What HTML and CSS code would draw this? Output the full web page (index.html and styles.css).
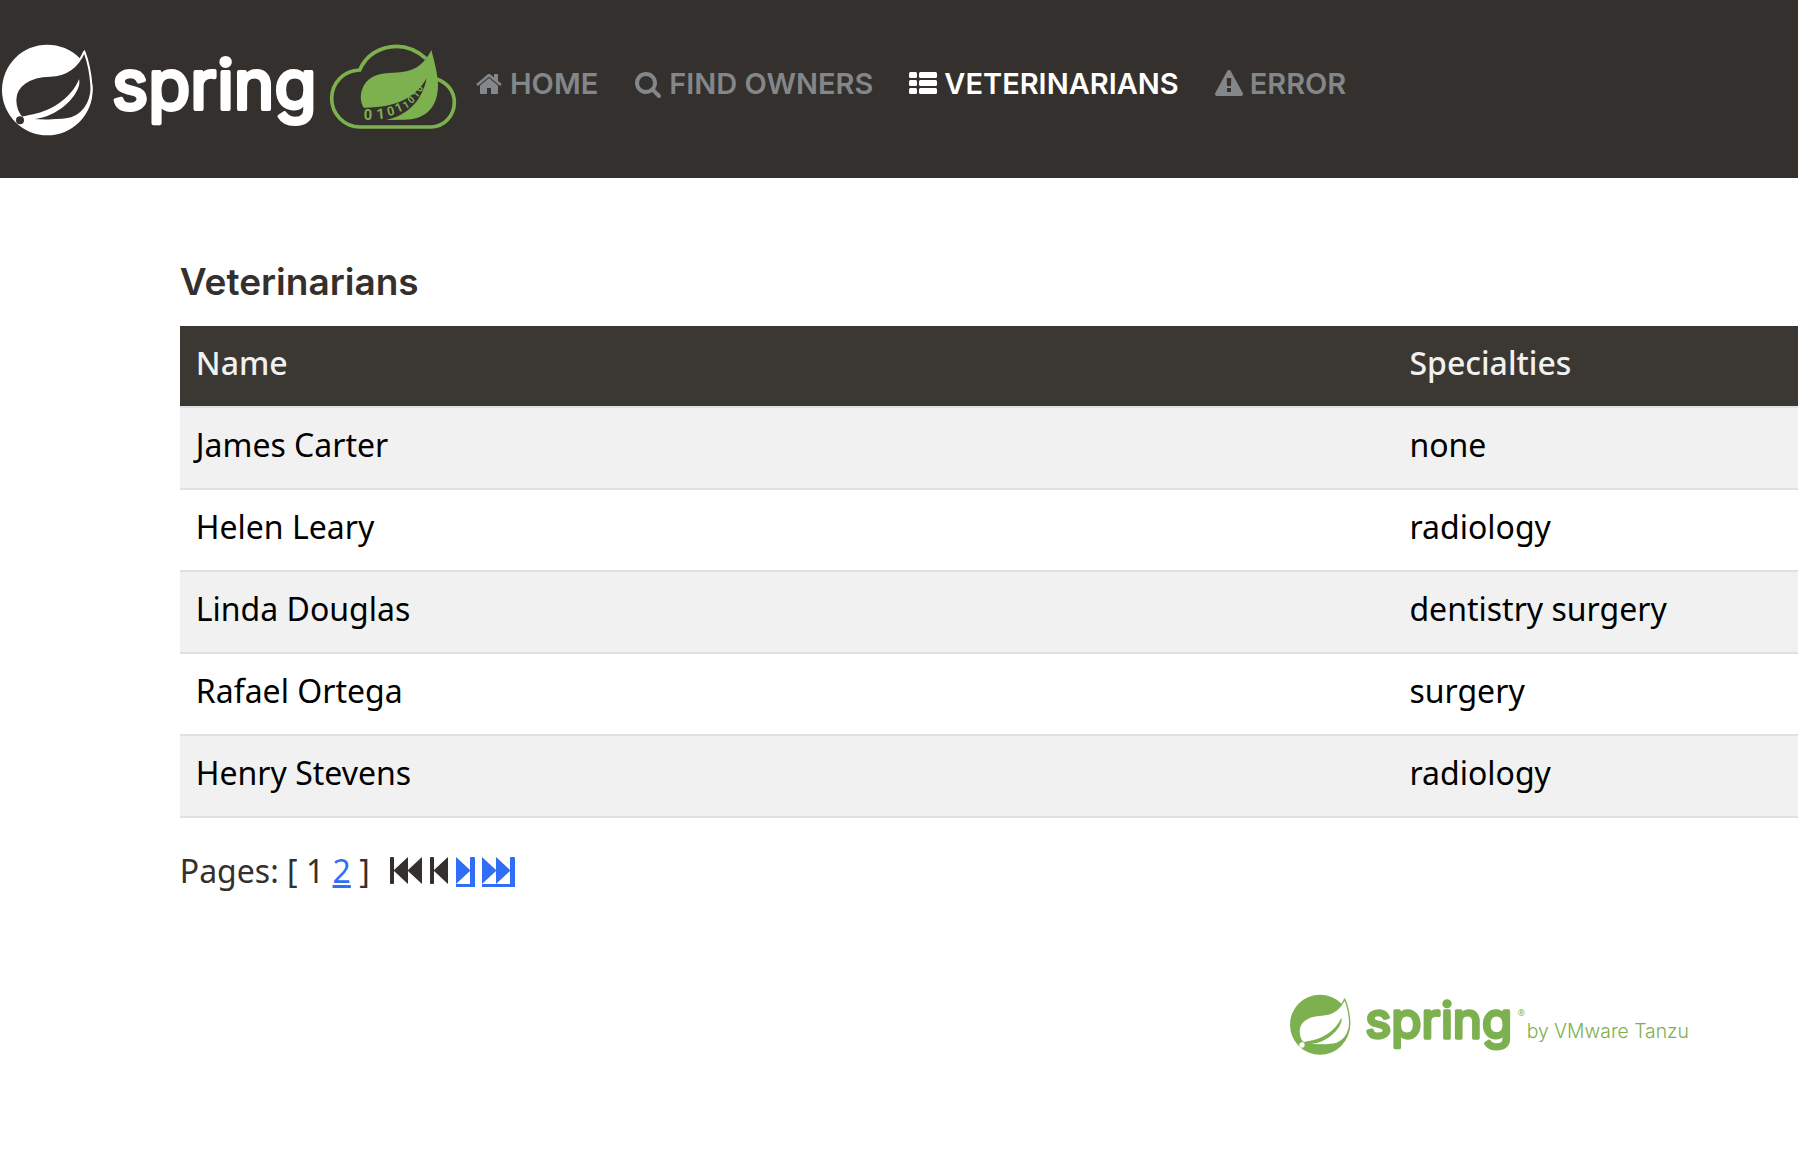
FILE: index.html
```html
<!DOCTYPE html>
<html lang="en">
<head>
<meta charset="utf-8">
<meta name="viewport" content="width=device-width, initial-scale=1">
<title>PetClinic :: Veterinarians</title>
<link rel="stylesheet" href="styles.css">
</head>
<body>
<header class="navbar">
  <a class="brand" href="#" aria-label="Spring">
    <svg class="brand-logo" viewBox="6 75 1362 270">
      <circle cx="142" cy="210" r="136" fill="#fff"/>
      <path class="leaf" stroke="#fff" stroke-width="6" stroke-linejoin="round" d="M253 94C241 122 215 166 150 167C88 168 46 198 46 240C46 265 54 282 68 297C110 303 185 303 216 294C262 276 277 230 274 195C271 150 262 118 253 94Z"/>
      <path fill="#fff" d="M52 282C62 292 70 290 84 286C150 276 212 238 237 178C246 206 205 264 142 288C122 295 104 297 90 299C140 302 190 304 224 296L204 330L80 322L62 306Z"/>
      <circle class="leaf" cx="60" cy="301" r="12"/>
      <text class="wordmark" x="336" y="267" font-size="206">spring</text>
      <g class="cloud">
        <path fill="none" stroke-width="11" d="M1278 116C1252 92 1222 79 1190 79C1140 79 1098 106 1079 150C1030 152 995 190 995 235C995 284 1034 321 1080 321H1292C1332 321 1363 288 1363 247C1363 214 1342 188 1310 177"/>
        <path stroke="none" d="M1294 90C1302 120 1314 165 1314 195C1314 268 1270 299 1215 299L1158 300C1222 288 1268 240 1280 175C1246 232 1190 264 1091 263C1080 244 1079 220 1091 197C1108 166 1140 159 1180 158C1240 157 1270 138 1294 90Z"/>
        <g class="digits">
          <text x="1091" y="301">0</text>
          <text x="1131" y="298" transform="rotate(-6 1131 298)">1</text>
          <text class="small" x="1165" y="289" transform="rotate(-14 1165 289)">0</text>
          <text class="small" x="1192" y="279" transform="rotate(-24 1192 279)">1</text>
          <text class="tiny" x="1216" y="268" transform="rotate(-30 1216 268)">1</text>
          <text class="tiny" x="1234" y="253" transform="rotate(-42 1234 253)">0</text>
          <text class="tiny" x="1250" y="236" transform="rotate(-50 1250 236)">1</text>
          <text class="tiny" x="1262" y="218" transform="rotate(-60 1262 218)">0</text>
        </g>
      </g>
    </svg>
  </a>
  <nav class="menu" aria-label="Main">
    <a class="menu-link" href="#">
      <svg class="icon" viewBox="0 0 1792 1792"><path d="M1472 992v480q0 26-19 45t-45 19h-384v-384h-256v384h-384q-26 0-45-19t-19-45v-480q0-1 .5-3t.5-3l575-474 575 474q1 2 1 6zm223-69l-62 74q-8 9-21 11h-3q-13 0-21-7l-692-577-692 577q-12 8-24 7-13-2-21-11l-62-74q-8-10-7-23.500t11-21.500l719-599q32-26 76-26t76 26l244 204v-195q0-14 9-23t23-9h192q14 0 23 9t9 23v408l219 182q10 8 11 21.500t-7 23.500z"/></svg>
      <span>HOME</span>
    </a>
    <a class="menu-link" href="#">
      <svg class="icon" viewBox="0 0 1792 1792"><path d="M1216 832q0-185-131.500-316.500t-316.500-131.500-316.500 131.500-131.500 316.500 131.500 316.500 316.500 131.500 316.500-131.500 131.500-316.500zm512 832q0 52-38 90t-90 38q-54 0-90-38l-343-342q-179 124-399 124-143 0-273.500-55.500t-225-150-150-225-55.500-273.500 55.500-273.500 150-225 225-150 273.500-55.500 273.500 55.500 225 150 150 225 55.500 273.500q0 220-124 399l343 343q37 37 37 90z"/></svg>
      <span>FIND OWNERS</span>
    </a>
    <a class="menu-link active" href="#" aria-current="page">
      <svg class="icon" viewBox="0 0 28 28"><rect y="2" width="8" height="6" rx="1.500"/><rect x="10" y="2" width="18" height="6" rx="1.500"/><rect y="10" width="8" height="6" rx="1.500"/><rect x="10" y="10" width="18" height="6" rx="1.500"/><rect y="18" width="8" height="6" rx="1.500"/><rect x="10" y="18" width="18" height="6" rx="1.500"/></svg>
      <span>VETERINARIANS</span>
    </a>
    <a class="menu-link" href="#">
      <svg class="icon" viewBox="0 0 1792 1792"><path d="M1024 1375v-190q0-14-9.500-23.500t-22.500-9.500h-192q-13 0-22.500 9.500t-9.500 23.500v190q0 14 9.500 23.500t22.500 9.500h192q13 0 22.500-9.500t9.500-23.500zm-2-374l18-459q0-12-10-19-13-11-24-11h-220q-11 0-24 11-10 7-10 21l17 457q0 10 10 16.500t24 6.500h185q14 0 23.500-6.500t10.500-16.500zm-14-934l768 1408q35 63-2 126-17 29-46.500 46t-63.500 17h-1536q-34 0-63.500-17t-46.500-46q-37-63-2-126l768-1408q17-31 47-49t65-18 65 18 47 49z"/></svg>
      <span>ERROR</span>
    </a>
  </nav>
</header>

<main class="content">
  <h1 class="title">Veterinarians</h1>
  <table class="vets">
    <thead>
      <tr><th class="col-name" scope="col">Name</th><th scope="col">Specialties</th></tr>
    </thead>
    <tbody>
      <tr><td>James Carter</td><td>none</td></tr>
      <tr><td>Helen Leary</td><td>radiology</td></tr>
      <tr><td>Linda Douglas</td><td>dentistry surgery</td></tr>
      <tr><td>Rafael Ortega</td><td>surgery</td></tr>
      <tr><td>Henry Stevens</td><td>radiology</td></tr>
    </tbody>
  </table>

  <nav class="pages" aria-label="Pages">
    <span>Pages: [ 1 <a href="#">2</a> ]</span>
    <span class="steps">
      <svg class="step wide" viewBox="0 0 33 27"><path d="M0 1q0-1 1-1h2q1 0 1 1v12L18 0v13L32 0v27L18 14v13L4 14v12q0 1-1 1H1q-1 0-1-1z"/></svg>
      <svg class="step" viewBox="0 0 19 27"><path d="M0 1q0-1 1-1h2q1 0 1 1v12L18 0v27L4 14v12q0 1-1 1H1q-1 0-1-1z"/></svg>
      <a class="step-link" href="#" aria-label="Next"><svg class="step" viewBox="0 0 19 27"><path d="M0 0l14 13V1q0-1 1-1h3q1 0 1 1v26h-5V14L0 27z"/></svg></a>
      <a class="step-link" href="#" aria-label="Last"><svg class="step wide" viewBox="0 0 33 27"><path d="M0 0l14 13V0l14 13V1q0-1 1-1h3q1 0 1 1v26h-5V14L14 27V14L0 27z"/></svg></a>
    </span>
  </nav>
</main>

<footer class="footer">
  <svg class="sponsor" viewBox="60 73 1200 183" role="img" aria-label="Spring by VMware Tanzu">
    <circle cx="150" cy="165" r="90"/>
    <path class="leaf" stroke="#7db04f" stroke-width="4" stroke-linejoin="round" d="M224 88C216 106 199 135 155 136C114 137 87 157 87 185C87 201 92 213 102 223C130 227 179 227 200 221C230 209 241 178 239 155C237 125 231 104 224 88Z"/>
    <path d="M91 213C97 219 103 218 112 215C156 209 197 183 214 144C220 162 192 201 150 217C137 221 125 223 116 224C149 226 182 227 206 222L192 245L110 240L98 229Z"/>
    <circle class="leaf" cx="96" cy="226" r="8"/>
    <text class="wordmark" x="286" y="206" font-size="148">spring</text>
    <text x="743" y="138" font-size="26">®</text>
    <text class="tagline" x="770" y="204" font-size="58">by VMware Tanzu</text>
  </svg>
</footer>
</body>
</html>
```
FILE: styles.css
```css
:root {
  --brown: #34302d;
  --green: #7db04f;
  --blue: #316ef8;
}

* { box-sizing: border-box; }

body {
  margin: 0;
  background: #fff;
  color: var(--brown);
  font: 32px/48px "Noto Sans", sans-serif;
}

/* Header */
.navbar {
  display: flex;
  align-items: flex-start;
  gap: 19px;
  padding: 45px 0 43px 2px;
  background: var(--brown);
}
.brand-logo {
  display: block;
  width: 454px;
  height: 90px;
  overflow: visible;
}
.brand-logo .leaf { fill: var(--brown); }
.wordmark {
  font-family: Inter, sans-serif;
  font-weight: 400;
  stroke-width: 12px;
  stroke-linejoin: round;
}
.brand-logo .wordmark { fill: #fff; stroke: #fff; }
.cloud { fill: var(--green); stroke: var(--green); }
.digits {
  stroke: none;
  font: 700 44px Roboto, sans-serif;
}
.digits .small { font-size: 38px; }
.digits .tiny { font-size: 30px; }

.menu {
  display: flex;
  gap: 36px;
  padding-top: 25px;
}
.menu-link {
  display: flex;
  align-items: center;
  gap: 7px;
  color: #838789;
  font: 600 29px/28px Inter, sans-serif;
  text-decoration: none;
}
.menu-link.active { color: #fff; }
.icon {
  width: 28px;
  height: 28px;
  fill: currentColor;
}

/* Content */
.content { padding: 82px 0 0 10%; }
.title {
  margin: 0 0 22px;
  font: 600 37px/44px Inter, sans-serif;
}
.vets {
  width: 100%;
  border-spacing: 0;
}
.vets th,
.vets td {
  padding: 13px 16px 19px;
  border-bottom: 2px solid #dee2e6;
  text-align: left;
}
.vets th {
  background: #3b3833;
  color: #f1f1f1;
  font-weight: 500;
}
.vets td { color: #000; }
.vets tbody tr:nth-child(odd) { background: #f1f1f1; }
.col-name { width: 75%; }

.pages {
  display: flex;
  gap: 20px;
  margin-top: 29px;
}
.pages a { color: var(--blue); }
.steps {
  display: flex;
  align-items: flex-start;
  gap: 7px;
  padding-top: 10px;
}
.step {
  display: block;
  width: 19px;
  height: 27px;
  fill: currentColor;
}
.step.wide { width: 33px; }
.step-link { border-bottom: 3px solid; }

/* Footer */
.footer {
  display: flex;
  justify-content: flex-end;
  padding: 99px 6% 96px 0;
}
.sponsor {
  width: 400px;
  height: 61px;
  overflow: visible;
  fill: var(--green);
}
.sponsor .leaf { fill: #fff; }
.sponsor .wordmark {
  stroke: var(--green);
  stroke-width: 10px;
}
.tagline {
  font-family: Inter, sans-serif;
  font-weight: 300;
}
```
